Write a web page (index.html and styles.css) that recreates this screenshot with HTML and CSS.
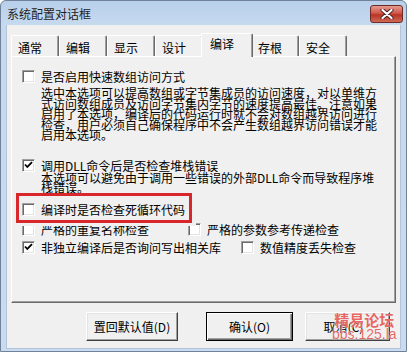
FILE: index.html
```html
<!DOCTYPE html>
<html>
<head>
<meta charset="utf-8">
<link rel="stylesheet" href="styles.css">
</head>
<body>
<div class="window">
  <div class="titlebar">
    <span class="title">系统配置对话框</span>
    <div class="close">
      <svg width="16" height="10" viewBox="0 0 16 10"><path d="M3.5 1 L12.5 9 M12.5 1 L3.5 9" stroke="#4a2020" stroke-width="4" stroke-linecap="round"/><path d="M3.5 1 L12.5 9 M12.5 1 L3.5 9" stroke="#ffffff" stroke-width="2.2" stroke-linecap="round"/></svg>
    </div>
  </div>
  <div class="client">
    <div class="tabs">
      <div class="tab">通常</div>
      <div class="tab">编辑</div>
      <div class="tab">显示</div>
      <div class="tab">设计</div>
      <div class="tab active">编译</div>
      <div class="tab">存根</div>
      <div class="tab">安全</div>
    </div>
    <div class="panel">
      <div class="row r1"><span class="cb"></span><span>是否启用快速数组访问方式</span></div>
      <div class="desc d1">选中本选项可以提高数组或字节集成员的访问速度，对以单维方<br>式访问数组成员及访问字节集内字节的速度提高最佳。注意如果<br>启用了本选项，编译后的代码运行时就不会对数组越界访问进行<br>检查，用户必须自己确保程序中不会产生数组越界访问错误才能<br>启用本选项。</div>
      <div class="row r2"><span class="cb checked"><svg width="11" height="11" viewBox="0 0 11 11"><path d="M2 4.5 L4.3 7 L9 2.2" fill="none" stroke="#000" stroke-width="1.8"/></svg></span><span>调用DLL命令后是否检查堆栈错误</span></div>
      <div class="desc d2">本选项可以避免由于调用一些错误的外部DLL命令而导致程序堆<br>栈错误。</div>
      <div class="hl">
        <div class="hl-box"><span class="cb"></span><span>编译时是否检查死循环代码</span></div>
      </div>
      <div class="row r4">
        <div class="item w1"><span class="cb"></span><span>严格的重复名称检查</span></div>
        <div class="item"><span class="cb"></span><span>严格的参数参考传递检查</span></div>
      </div>
      <div class="row r5">
        <div class="item w2"><span class="cb checked"><svg width="11" height="11" viewBox="0 0 11 11"><path d="M2 4.5 L4.3 7 L9 2.2" fill="none" stroke="#000" stroke-width="1.8"/></svg></span><span>非独立编译后是否询问写出相关库</span></div>
        <div class="item"><span class="cb"></span><span>数值精度丢失检查</span></div>
      </div>
    </div>
    <div class="buttons">
      <div class="btn b1">置回默认值(D)</div>
      <div class="btn b2 default">确认(O)</div>
      <div class="btn b3">取消(C)
        <div class="watermark"><div class="wm1">精易论坛</div><div class="wm2">bbs.125.la</div></div>
      </div>
    </div>
  </div>
</div>
</body>
</html>
```
FILE: styles.css
```css
html, body {
  margin: 0;
  padding: 0;
  background: #ffffff;
}
body {
  font-family: "Noto Sans CJK SC", "Liberation Sans", sans-serif;
  font-size: 12px;
  color: #000;
}
.window {
  box-sizing: border-box;
  width: 407px;
  height: 352px;
  border: 1px solid #6f8299;
  border-radius: 6px 6px 0 0;
  background: linear-gradient(#b9d0ea, #c6d9ef 24px, #c9dbf0);
  display: flex;
  flex-direction: column;
  overflow: hidden;
}
.titlebar {
  height: 24px;
  display: flex;
  justify-content: space-between;
  align-items: flex-start;
  padding: 0 3px 0 6px;
  flex: none;
}
.title {
  line-height: 14px;
  margin-top: 6px;
  color: #1e1e1e;
}
.close {
  margin-top: 4px;
  width: 31px;
  height: 16px;
  border: 1px solid #6d2b25;
  border-radius: 3px;
  background: linear-gradient(#e49a8f, #d0584a 45%, #b83424 55%, #cf6a55);
  display: flex;
  align-items: center;
  justify-content: center;
}
.close svg { display: block; }
.client {
  flex: 1;
  background: #f0f0f0;
  display: flex;
  flex-direction: column;
  border: 1px solid #b4c4d6;
  border-width: 0 1px 1px 1px;
  margin: 0 5px 2px 5px;
  padding: 0 1px 1px 1px;
}
.tabs {
  display: flex;
  align-items: flex-end;
  height: 23px;
  margin: 8px 3px 0 3px;
  flex: none;
}
.tab {
  box-sizing: border-box;
  width: 48px;
  height: 21px;
  padding: 4px 0 0 6px;
  line-height: 15px;
  border-top: 1px solid #ffffff;
  border-left: 1px solid #ffffff;
  border-right: 1px solid #696969;
  box-shadow: inset -1px 0 #a0a0a0;
  border-radius: 2px 2px 0 0;
  background: #f0f0f0;
}
.tab.active {
  width: 52px;
  height: 24px;
  margin: 0 -2px -1px -2px;
  padding: 2px 0 0 8px;
  position: relative;
  z-index: 1;
}
.panel {
  box-sizing: border-box;
  height: 247px;
  margin: 0 3px;
  border-top: 1px solid #ffffff;
  border-left: 1px solid #ffffff;
  border-right: 1px solid #696969;
  border-bottom: 1px solid #696969;
  box-shadow: inset -1px -1px #a0a0a0;
  padding-left: 10px;
  display: flex;
  flex-direction: column;
  flex: none;
}
.row {
  display: flex;
  align-items: center;
  height: 15px;
  line-height: 15px;
  white-space: nowrap;
}
.item {
  display: flex;
  align-items: center;
}
.w1 { width: 166px; }
.w2 { width: 219px; }
.cb {
  box-sizing: border-box;
  width: 13px;
  height: 13px;
  flex: none;
  margin-right: 6px;
  background: #ffffff;
  border-top: 1px solid #a0a0a0;
  border-left: 1px solid #a0a0a0;
  border-right: 1px solid #ffffff;
  border-bottom: 1px solid #ffffff;
  box-shadow: inset 1px 1px #696969, inset -1px -1px #e3e3e3;
  display: flex;
  align-items: center;
  justify-content: center;
}
.cb svg { display: block; }
.r1 { margin-top: 12px; }
.desc {
  margin-left: 19px;
  line-height: 10.5px;
  white-space: nowrap;
}
.d1 { margin-top: 4px; height: 52.5px; }
.r2 { margin-top: 17px; }
.d2 { height: 20.5px; }
.hl {
  position: relative;
  z-index: 1;
  height: 33px;
  width: 180px;
  margin-left: -6px;
  background: #f0f0f0;
}
.hl-box {
  box-sizing: border-box;
  height: 30px;
  width: 176px;
  border: 3px solid #d8262b;
  padding: 3px 0 0 3px;
  display: flex;
  align-items: center;
  white-space: nowrap;
}
.r4 { margin-top: -4px; }
.r5 { margin-top: 3px; }
.buttons {
  display: flex;
  justify-content: flex-end;
  margin-top: 9px;
  padding-right: 9px;
  flex: none;
}
.btn {
  box-sizing: border-box;
  height: 29px;
  display: flex;
  align-items: center;
  justify-content: center;
  background: #f0f0f0;
  border-top: 1px solid #ffffff;
  border-left: 1px solid #ffffff;
  border-right: 1px solid #404040;
  border-bottom: 1px solid #404040;
  box-shadow: inset -1px -1px #a0a0a0, inset 1px 1px #e3e3e3;
  white-space: nowrap;
}
.b1 { width: 92px; margin-right: 28px; }
.b2 { width: 87px; margin-right: 12px; }
.b3 { width: 85px; position: relative; padding-right: 8px; }
.default {
  border: 1px solid #000;
  box-shadow: inset 1px 1px #ffffff, inset -1px -1px #696969, inset -2px -2px #a0a0a0;
}
.watermark {
  position: absolute;
  left: 26px;
  top: -1px;
  color: rgba(226, 76, 70, 0.85);
  text-align: center;
}
.wm1 {
  font-size: 15px;
  line-height: 16px;
  font-weight: bold;
  text-shadow: 0 0 1px #fff;
}
.wm2 {
  font-family: "Liberation Sans", sans-serif;
  font-size: 14px;
  line-height: 12px;
  text-shadow: 0 0 1px #fff;
}
```
